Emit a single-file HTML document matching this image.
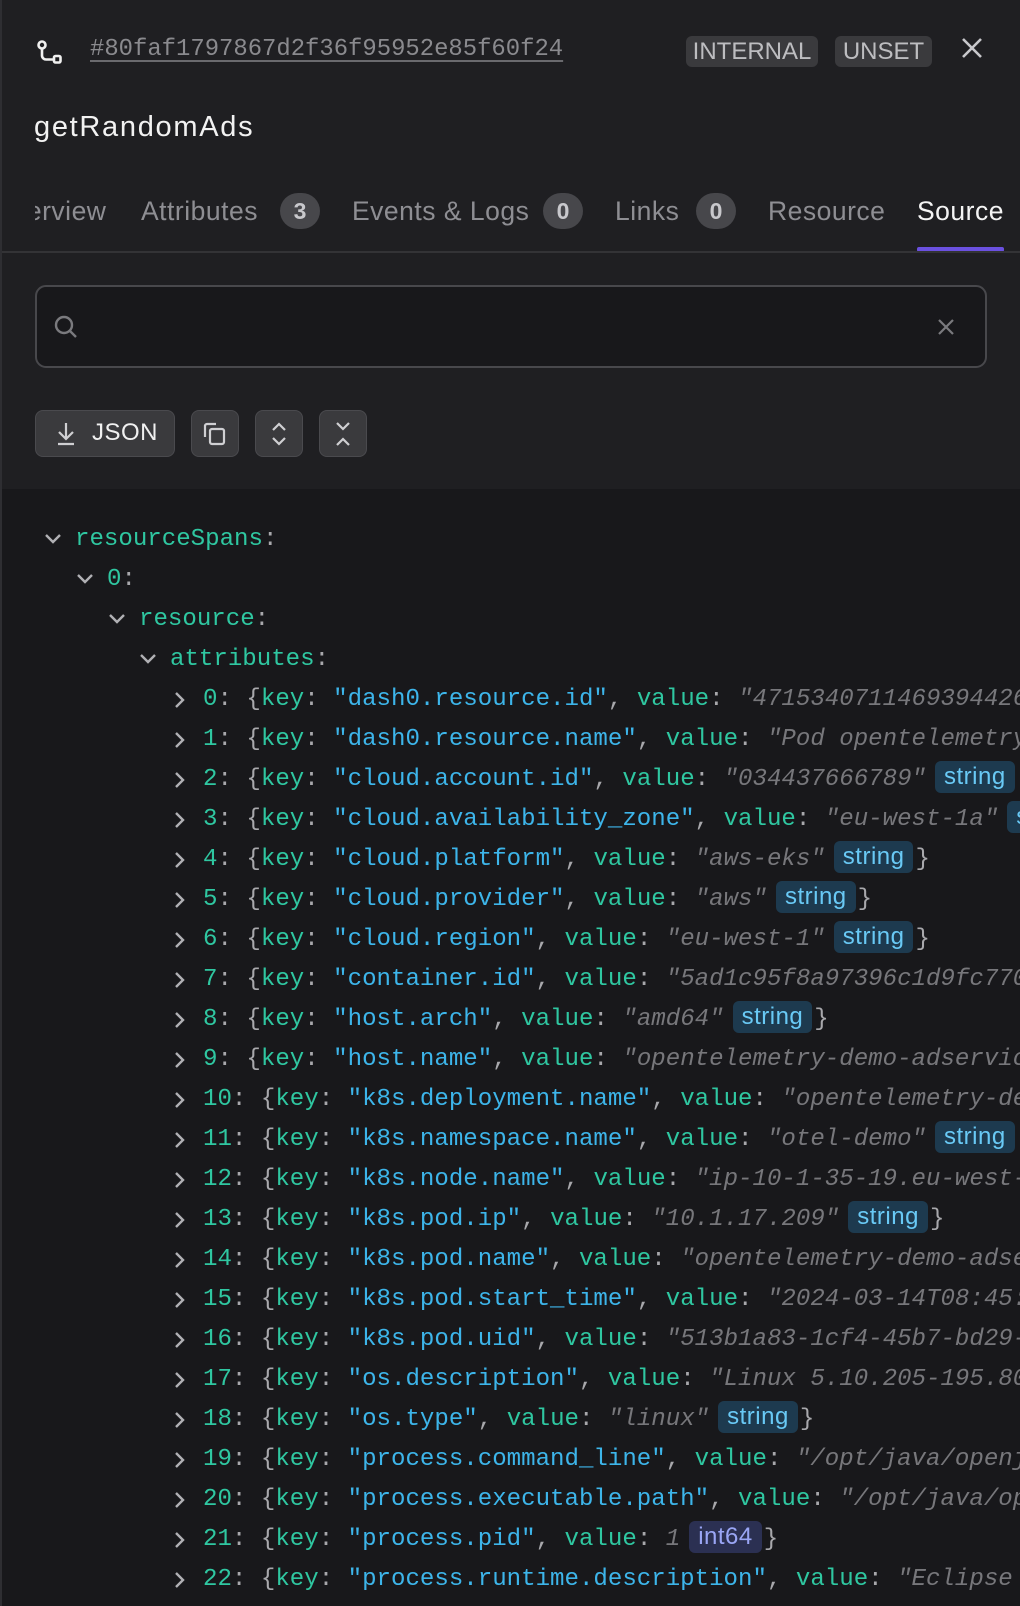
<!DOCTYPE html>
<html><head><meta charset="utf-8"><style>
*{margin:0;padding:0;box-sizing:border-box}
html,body{width:1020px;height:1606px;overflow:hidden}
body{background:#1f1f22;font-family:"Liberation Sans",sans-serif;position:relative}
.lb{position:absolute;left:0;top:0;width:2px;height:1606px;background:#2e2e32;z-index:5}
.a{position:absolute;white-space:nowrap}
.hash{left:90px;top:36px;font:23.9px/28px "Liberation Mono",monospace;color:#8a8a8e;text-decoration:underline;text-underline-offset:5px;text-decoration-color:#6a6a6e}
.pill{top:36px;height:31px;background:#3a3a3d;color:#bdbdc0;border-radius:6px;font-size:24px;line-height:31px;text-align:center}
.title{left:34px;top:109px;font-size:29px;letter-spacing:1.7px;color:#f2f2f2;line-height:36px}
.tab{top:195px;font-size:26.5px;letter-spacing:.5px;color:#8e8e93;line-height:32px}
.cnt{top:193px;width:40px;height:36px;border-radius:18px;background:#47474b;color:#c8c8cc;font-size:23px;font-weight:bold;line-height:36px;text-align:center}
.search{left:35px;top:285px;width:952px;height:83px;border:2px solid #48484c;border-radius:11px;background:#18181b}
.btn{top:410px;height:47px;background:#3a3a3d;border:1.5px solid #4a4a4e;border-radius:8px}
.code{position:absolute;left:0;top:489px;width:1020px;height:1117px;background:#18181b;overflow:hidden}
#rows{position:absolute;left:0;top:0;width:1020px;height:1606px;overflow:hidden}
.ln{position:absolute;height:40px;white-space:pre;font:24.1px/40px "Liberation Mono",monospace;color:#a8a8ac}
.ln svg{position:absolute;left:-31px;top:12px}
.k{color:#2fc7a1}.s{color:#3db5ea}.v{color:#77777b;font-style:italic}
.b{display:inline-block;font-family:"Liberation Sans",sans-serif;font-style:normal;font-size:24px;letter-spacing:.5px;line-height:32px;height:32px;padding:0 9px;border-radius:6px;margin:0 2px 0 9px;vertical-align:1px;background:#1d3a4f;color:#69c9f5}
.b.i{background:#2b3052;color:#9aa6f5}
</style></head><body>
<div class="lb"></div>
<svg class="a" style="left:36px;top:40px" width="28" height="26" viewBox="0 0 28 26" fill="none" stroke="#f0f0f0" stroke-width="2.6"><circle cx="6" cy="5" r="3.5"/><path d="M6 8.5v7a4 4 0 0 0 4 4h7"/><rect x="18" y="16" width="6.5" height="6.5" rx="1.5"/></svg>
<div class="a hash">#80faf1797867d2f36f95952e85f60f24</div>
<div class="a pill" style="left:686px;width:132px">INTERNAL</div>
<div class="a pill" style="left:835px;width:97px">UNSET</div>
<svg class="a" style="left:960px;top:36px" width="24" height="24" viewBox="0 0 24 24" stroke="#c8c8cc" stroke-width="2.6"><path d="M3 3l18 18M21 3L3 21"/></svg>
<div class="a title">getRandomAds</div>
<div class="a tab" style="left:-8px">Overview</div>
<div class="a" style="left:0;top:190px;width:35px;height:45px;background:#1f1f22"></div>
<div class="a tab" style="left:141px">Attributes</div><div class="a cnt" style="left:280px">3</div>
<div class="a tab" style="left:352px">Events &amp; Logs</div><div class="a cnt" style="left:543px">0</div>
<div class="a tab" style="left:615px">Links</div><div class="a cnt" style="left:696px">0</div>
<div class="a tab" style="left:768px">Resource</div>
<div class="a tab" style="left:917px;color:#f4f4f4">Source</div>
<div class="a" style="left:917px;top:247px;width:87px;height:5px;background:#6a50e0;border-radius:2px"></div>
<div class="a" style="left:0;top:251px;width:1020px;height:2px;background:#333336"></div>
<div class="a search"></div>
<svg class="a" style="left:53px;top:314px" width="26" height="26" viewBox="0 0 26 26" fill="none" stroke="#7a7a7e" stroke-width="2.4"><circle cx="11" cy="11" r="8"/><path d="M17 17l6 6"/></svg>
<svg class="a" style="left:937px;top:318px" width="18" height="18" viewBox="0 0 18 18" stroke="#7a7a7e" stroke-width="2.2"><path d="M2 2l14 14M16 2L2 16"/></svg>
<div class="a btn" style="left:35px;width:140px"></div>
<svg class="a" style="left:55px;top:421px" width="22" height="26" viewBox="0 0 22 26" fill="none" stroke="#cfcfd2" stroke-width="2.2"><path d="M11 2v15M4 11l7 7 7-7M3 23h16"/></svg>
<div class="a" style="left:92px;top:418px;font-size:24px;letter-spacing:.5px;line-height:30px;color:#f0f0f0">JSON</div>
<div class="a btn" style="left:191px;width:48px"></div>
<svg class="a" style="left:201px;top:420px" width="28" height="28" viewBox="0 0 28 28" fill="none" stroke="#cfcfd2" stroke-width="2.2"><path d="M4 17V6a2 2 0 0 1 2-2h9"/><rect x="9" y="9" width="14" height="15" rx="2"/></svg>
<div class="a btn" style="left:255px;width:48px"></div>
<svg class="a" style="left:269px;top:420px" width="20" height="28" viewBox="0 0 20 28" fill="none" stroke="#cfcfd2" stroke-width="2.2"><path d="M4 10l6-6 6 6M4 18l6 6 6-6"/></svg>
<div class="a btn" style="left:319px;width:48px"></div>
<svg class="a" style="left:333px;top:420px" width="20" height="28" viewBox="0 0 20 28" fill="none" stroke="#cfcfd2" stroke-width="2.2"><path d="M4 3l6 6 6-6M4 25l6-6 6 6"/></svg>

<div class="code">
<div class="ln" style="left:75px;top:31px"><svg width="18" height="14" viewBox="0 0 18 14" fill="none" stroke="#b0b0b4" stroke-width="2.4"><path d="M2 3l7 7 7-7"/></svg><span class="k">resourceSpans</span>:</div>
<div class="ln" style="left:107px;top:71px"><svg width="18" height="14" viewBox="0 0 18 14" fill="none" stroke="#b0b0b4" stroke-width="2.4"><path d="M2 3l7 7 7-7"/></svg><span class="k">0</span>:</div>
<div class="ln" style="left:139px;top:111px"><svg width="18" height="14" viewBox="0 0 18 14" fill="none" stroke="#b0b0b4" stroke-width="2.4"><path d="M2 3l7 7 7-7"/></svg><span class="k">resource</span>:</div>
<div class="ln" style="left:170px;top:151px"><svg width="18" height="14" viewBox="0 0 18 14" fill="none" stroke="#b0b0b4" stroke-width="2.4"><path d="M2 3l7 7 7-7"/></svg><span class="k">attributes</span>:</div>
</div>
<div id="rows"></div>
<script>
var d=[["dash0.resource.id",'"4715340711469394426758"'],["dash0.resource.name",'"Pod opentelemetry-demo-adservice"'],["cloud.account.id",'"034437666789"',"string"],["cloud.availability_zone",'"eu-west-1a"',"string"],["cloud.platform",'"aws-eks"',"string",1],["cloud.provider",'"aws"',"string",1],["cloud.region",'"eu-west-1"',"string",1],["container.id",'"5ad1c95f8a97396c1d9fc770ab12"'],["host.arch",'"amd64"',"string",1],["host.name",'"opentelemetry-demo-adservice-abc"'],["k8s.deployment.name",'"opentelemetry-demo-adservice"'],["k8s.namespace.name",'"otel-demo"',"string"],["k8s.node.name",'"ip-10-1-35-19.eu-west-1.compute"'],["k8s.pod.ip",'"10.1.17.209"',"string",1],["k8s.pod.name",'"opentelemetry-demo-adservice-xyz"'],["k8s.pod.start_time",'"2024-03-14T08:45:12Z"'],["k8s.pod.uid",'"513b1a83-1cf4-45b7-bd29-abcdef"'],["os.description",'"Linux 5.10.205-195.804.amzn2"'],["os.type",'"linux"',"string",1],["process.command_line",'"/opt/java/openjdk/bin/java"'],["process.executable.path",'"/opt/java/openjdk/bin"'],["process.pid","1","int64",1],["process.runtime.description",'"Eclipse Adoptium OpenJDK"']];
var h="";
for(var i=0;i<d.length;i++){var r=d[i];
h+='<div class="ln" style="left:203px;top:'+(680+i*40)+'px"><svg width="14" height="18" viewBox="0 0 14 18" fill="none" stroke="#b0b0b4" stroke-width="2.4" style="left:-30px;top:11px"><path d="M3 2l7 7-7 7"/></svg><span class="k">'+i+'</span>: {<span class="k">key</span>: <span class="s">"'+r[0]+'"</span>, <span class="k">value</span>: <span class="v">'+r[1]+'</span>'+(r[2]?'<span class="b'+(r[2]=="int64"?" i":"")+'">'+r[2]+'</span>':'')+(r[3]?'}':'')+'</div>';}
document.getElementById("rows").innerHTML=h;
</script>
</body></html>
